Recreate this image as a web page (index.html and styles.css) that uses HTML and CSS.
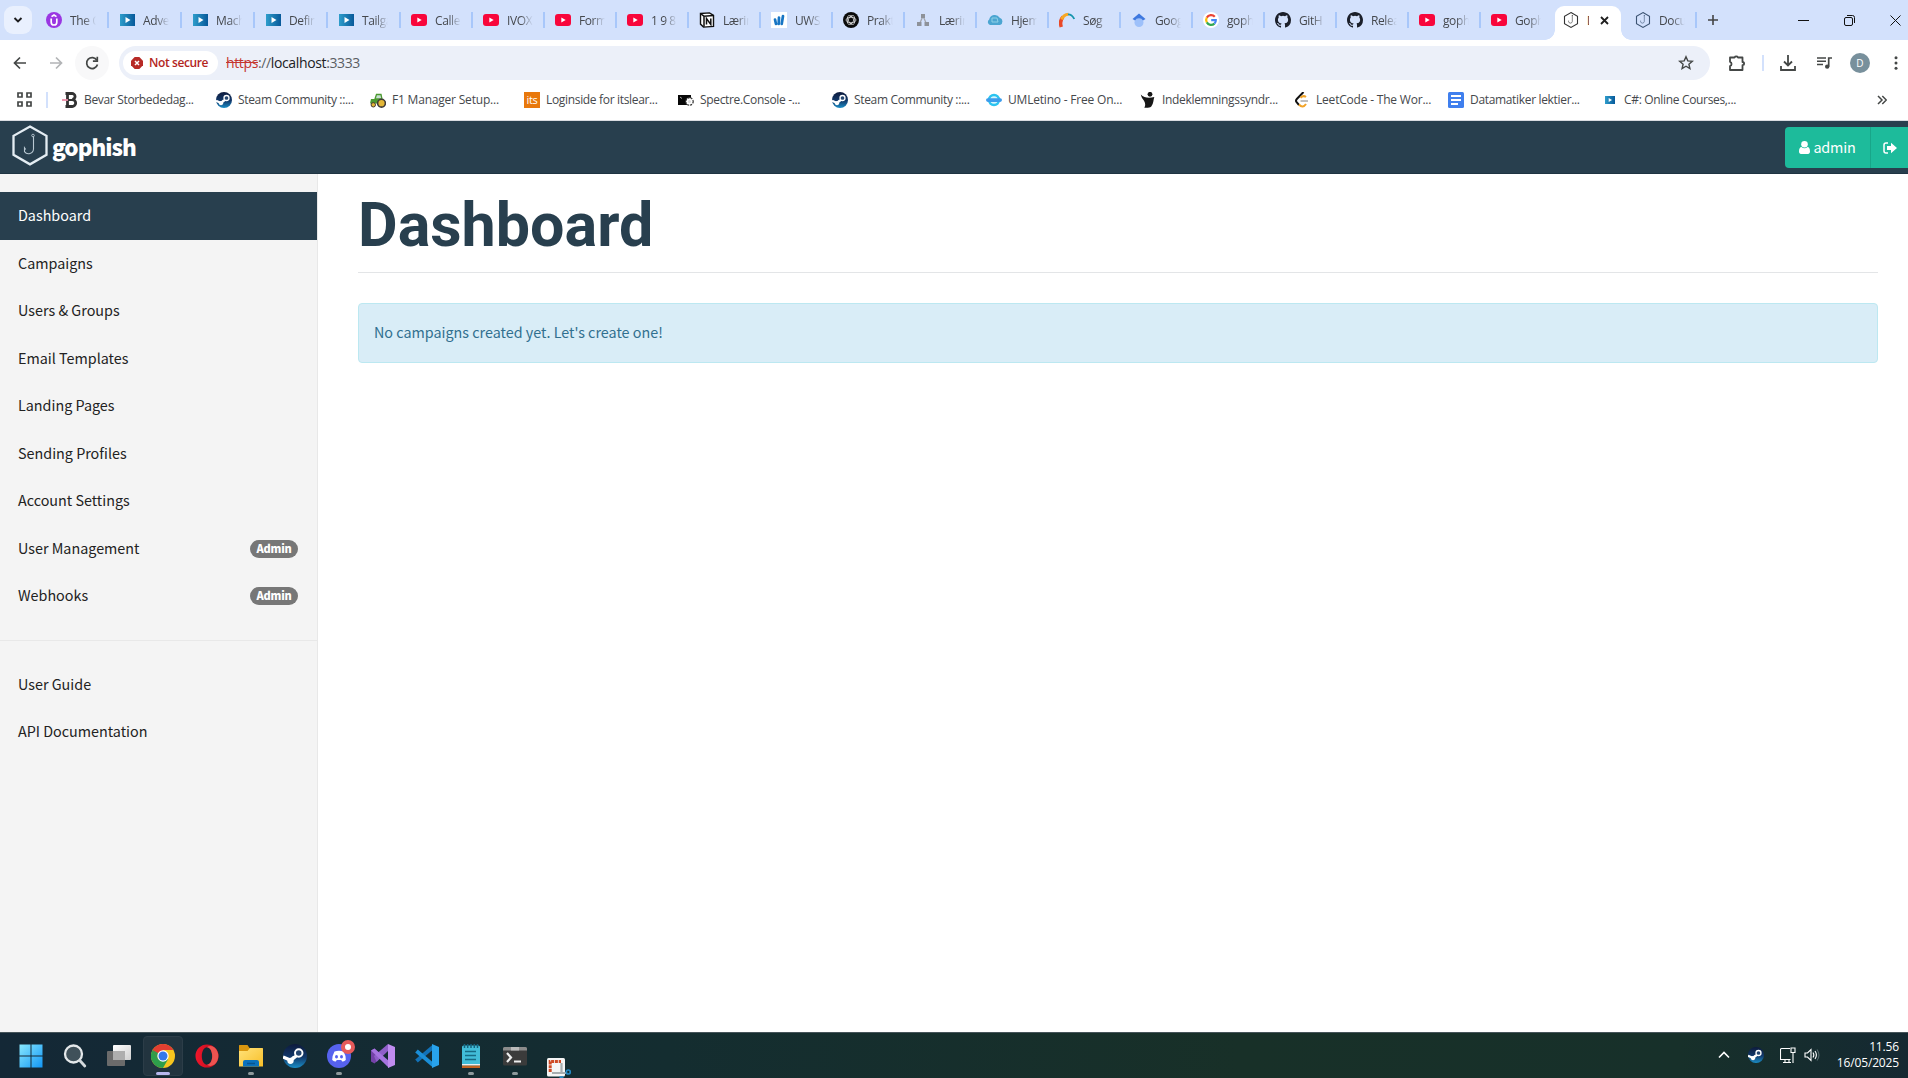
FILE: index.html
```html
<!DOCTYPE html>
<html lang="en">
<head>
<meta charset="utf-8">
<title>Dashboard - Gophish</title>
<link rel="stylesheet" href="styles.css">
</head>
<body>
<svg class="defs" width="0" height="0">
  <defs>
    <linearGradient id="gBlue" x1="0" x2="1"><stop offset="0" stop-color="#2e9dcb"/><stop offset="1" stop-color="#07599a"/></linearGradient>
    <linearGradient id="gSteam" x1="0" y1="0" x2="0" y2="1"><stop offset="0" stop-color="#0d1a3c"/><stop offset=".55" stop-color="#12396b"/><stop offset="1" stop-color="#1b8fc8"/></linearGradient>
    <linearGradient id="gWin" gradientUnits="userSpaceOnUse" x1="0" y1="0" x2="24" y2="24"><stop offset="0" stop-color="#8ceafd"/><stop offset="1" stop-color="#0f94f5"/></linearGradient>
    <linearGradient id="gOpera" x1="0" x2="1"><stop offset="0" stop-color="#f0162b"/><stop offset="1" stop-color="#b80b1a"/></linearGradient>
    <linearGradient id="gFolder" x1="0" y1="0" x2="1" y2="1"><stop offset="0" stop-color="#ffe27a"/><stop offset="1" stop-color="#f8bf28"/></linearGradient>
    <linearGradient id="gTv" x1="0" y1="0" x2="1" y2="1"><stop offset="0" stop-color="#fff"/><stop offset="1" stop-color="#cfcfcf"/></linearGradient>
  </defs>
  <symbol id="play" viewBox="0 0 16 16"><rect x="1" y="2" width="15" height="12" fill="url(#gBlue)"/><path d="M6.500 5v6l5-3z" fill="#fff"/></symbol>
  <symbol id="yt" viewBox="0 0 16 16"><rect y="2" width="16" height="12" rx="3" fill="#f8063b"/><path d="M6.300 5.400v5.200l4.400-2.600z" fill="#fff"/></symbol>
  <symbol id="steam" viewBox="0 0 16 16"><circle cx="8" cy="8" r="8" fill="url(#gSteam)"/><path d="M0 8.700l5.200 2.200 4-3.200M4.500 11.300l3-2.600" stroke="#fff" stroke-width="2.200" fill="none"/><circle cx="5" cy="11.200" r="2.100" fill="#fff"/><circle cx="10.500" cy="6" r="2.500" fill="#24456f" stroke="#fff" stroke-width="1.300"/></symbol>
  <symbol id="hook" viewBox="0 0 16 16"><path d="M8 .6l6.500 3.700v7.400L8 15.400l-6.500-3.700V4.300z" fill="none" stroke="currentColor" stroke-width="1.100"/><path d="M9.300 4.300v5.200a1.900 1.900 0 0 1-3.700.3v-1.200" fill="none" stroke="currentColor" stroke-width=".8" opacity=".75"/><circle cx="9.300" cy="3.700" r=".6" fill="currentColor"/></symbol>
  <symbol id="github" viewBox="0 0 16 16"><path fill="#1b1f2a" d="M8 0C3.580 0 0 3.580 0 8c0 3.540 2.290 6.530 5.470 7.590.4.070.55-.17.55-.38v-1.490c-2.010.37-2.530-.49-2.690-.94-.09-.23-.48-.94-.82-1.130-.28-.15-.68-.52-.01-.53.63-.01 1.080.58 1.230.82.72 1.210 1.870.87 2.330.66.070-.52.28-.87.51-1.070-1.780-.2-3.640-.89-3.640-3.950 0-.87.31-1.590.82-2.150-.08-.2-.36-1.020.08-2.120 0 0 .67-.21 2.200.82a7.600 7.600 0 0 1 4 0c1.530-1.040 2.200-.82 2.200-.82.44 1.100.16 1.920.08 2.120.51.56.82 1.270.82 2.150 0 3.070-1.870 3.750-3.650 3.950.29.25.54.73.54 1.480v2.200c0 .21.15.46.55.38A8.010 8.010 0 0 0 16 8c0-4.420-3.580-8-8-8z"/></symbol>
</svg>

<header class="tabstrip">
  <button class="tabsearch"><svg width="10" height="8" viewBox="0 0 10 8"><path d="M1.500 2l3.500 3.500L8.500 2" fill="none" stroke="#1d1d1f" stroke-width="1.900"/></svg></button>
  <div class="tab wide"><svg class="fav" viewBox="0 0 16 16"><circle cx="8" cy="8" r="8" fill="#9a36e2"/><path d="M5.200 6.500v3.700a2.800 2.800 0 0 0 5.600 0V6.500M5.500 4.600L8 3l2.500 1.600" fill="none" stroke="#fff" stroke-width="1.700"/></svg><span>The C</span></div>
  <div class="tab wide"><svg class="fav"><use href="#play"/></svg><span>Adve</span></div>
  <div class="tab wide"><svg class="fav"><use href="#play"/></svg><span>Mach</span></div>
  <div class="tab wide"><svg class="fav"><use href="#play"/></svg><span>Defin</span></div>
  <div class="tab wide"><svg class="fav"><use href="#play"/></svg><span>Tailga</span></div>
  <div class="tab"><svg class="fav"><use href="#yt"/></svg><span>Calle</span></div>
  <div class="tab"><svg class="fav"><use href="#yt"/></svg><span>IVOX</span></div>
  <div class="tab"><svg class="fav"><use href="#yt"/></svg><span>Form</span></div>
  <div class="tab"><svg class="fav"><use href="#yt"/></svg><span>1 9 8</span></div>
  <div class="tab"><svg class="fav" viewBox="0 0 16 16"><path d="M1.500 1.500l9-.6 4 2.500v11l-10 .7-3-3z" fill="#fff" stroke="#111" stroke-width="1.400"/><path d="M2 2l3 2.200 9.500-.7M5 4.200v10.500M7.500 12.500v-6l4.300 6v-6" fill="none" stroke="#111" stroke-width="1.500"/></svg><span>Lærin</span></div>
  <div class="tab"><svg class="fav" viewBox="0 0 16 16"><path d="M0 0h16v16H0z" fill="#fff"/><path d="M4 7.500l1 4.500M8 5.500l-.3 6.500M12 4l-1.300 8" stroke="#1775c4" stroke-width="2.700" stroke-linecap="round"/></svg><span>UWS</span></div>
  <div class="tab"><svg class="fav" viewBox="0 0 16 16"><circle cx="8" cy="8" r="8" fill="#0b0b0b"/><g fill="none" stroke="#ddd" stroke-width=".8"><ellipse cx="8" cy="8" rx="4.900" ry="2.700"/><ellipse cx="8" cy="8" rx="4.900" ry="2.700" transform="rotate(60 8 8)"/><ellipse cx="8" cy="8" rx="4.900" ry="2.700" transform="rotate(120 8 8)"/></g></svg><span>Prakt</span></div>
  <div class="tab"><svg class="fav" viewBox="0 0 16 16"><path d="M8 4L4.500 12M8 4l3.500 8" stroke="#a2a5ac" stroke-width="1.300"/><path d="M6 2h4v4H6zM2 10h4.500v4H2zM9.500 10H14v4H9.500z" fill="#8e9299"/></svg><span>Lærin</span></div>
  <div class="tab"><svg class="fav" viewBox="0 0 16 16"><path d="M3 13a3 3 0 0 1-.8-5.400 5.700 5.700 0 0 1 10.500-1.800A3.800 3.800 0 0 1 13 13z" fill="#4ba5d1"/><path d="M5 6h5l1 4H5z" fill="none" stroke="#8fd0e6" stroke-width="1"/></svg><span>Hjem</span></div>
  <div class="tab"><svg class="fav" viewBox="0 0 16 16"><path d="M2.300 15C1 11 2 7 4 5" fill="none" stroke="#e94827" stroke-width="3.500"/><path d="M2.600 7.500C4 4 6.500 2.500 9.500 2.300" fill="none" stroke="#f8a824" stroke-width="3"/><path d="M9 2.300c3 0 5 2 6.200 4.700" fill="none" stroke="#1695ad" stroke-width="1.800"/></svg><span>Søg</span></div>
  <div class="tab"><svg class="fav" viewBox="0 0 16 16"><circle cx="8" cy="10.500" r="4.500" fill="#9dc0fa"/><path d="M4 8.500a4.600 4.600 0 0 1 8 0L14.500 7 8 1.500 1.500 7z" fill="#3e78df"/></svg><span>Goog</span></div>
  <div class="tab"><svg class="fav" viewBox="0 0 16 16"><circle cx="8" cy="8" r="8" fill="#fff"/><g fill="none" stroke-width="2.200"><path d="M11.800 4.800A4.900 4.900 0 0 0 3.800 5.600" stroke="#ea4335"/><path d="M3.800 5.600a4.900 4.900 0 0 0 0 4.800" stroke="#fbbc05"/><path d="M3.800 10.400a4.900 4.900 0 0 0 7.600 1.200" stroke="#34a853"/><path d="M11.400 11.600c1.200-1 1.500-2.200 1.400-3.500H8.200" stroke="#4285f4"/></g></svg><span>goph</span></div>
  <div class="tab"><svg class="fav"><use href="#github"/></svg><span>GitH</span></div>
  <div class="tab"><svg class="fav"><use href="#github"/></svg><span>Relea</span></div>
  <div class="tab"><svg class="fav"><use href="#yt"/></svg><span>goph</span></div>
  <div class="tab nosep"><svg class="fav"><use href="#yt"/></svg><span>Goph</span></div>
  <div class="tab active"><svg class="fav"><use href="#hook"/></svg><span>D</span><svg class="close" width="9" height="9" viewBox="0 0 9 9"><path d="M1 1l7 7M8 1L1 8" stroke="#1f1f1f" stroke-width="1.800"/></svg></div>
  <div class="tab last"><svg class="fav blue"><use href="#hook"/></svg><span>Docu</span></div>
  <svg class="plus" width="12" height="12" viewBox="0 0 12 12"><path d="M6 1v10M1 6h10" stroke="#444" stroke-width="1.600"/></svg>
  <div class="winctl">
    <svg width="11" height="11" viewBox="0 0 11 11"><path d="M0 5.500h11" stroke="#111"/></svg>
    <svg width="11" height="11" viewBox="0 0 11 11"><rect x=".5" y="2.500" width="8" height="8" rx="1.500" fill="none" stroke="#111"/><path d="M3 .5h5.500a2 2 0 0 1 2 2V8" fill="none" stroke="#111"/></svg>
    <svg width="11" height="11" viewBox="0 0 11 11"><path d="M.5.500l10 10M10.500.500l-10 10" stroke="#111"/></svg>
  </div>
</header>

<div class="toolbar">
  <svg class="nav" viewBox="0 0 16 16"><path d="M14 8H3M8 2.500L2.500 8 8 13.500" fill="none" stroke="#444746" stroke-width="1.700"/></svg>
  <svg class="nav fwd" viewBox="0 0 16 16"><path d="M2 8h11M8 2.500L13.500 8 8 13.500" fill="none" stroke="#b2b4b6" stroke-width="1.700"/></svg>
  <div class="reload"><svg width="16" height="16" viewBox="0 0 16 16"><path d="M12.900 5.200A5.500 5.500 0 1 0 13.500 9.500" fill="none" stroke="#444746" stroke-width="1.700"/><path d="M13.300 1.800v4.400H8.900" fill="none" stroke="#444746" stroke-width="1.700"/></svg></div>
  <div class="omnibox">
    <div class="chip"><svg width="12" height="12" viewBox="0 0 12 12"><path d="M3.700 0h4.600L12 3.700v4.600L8.300 12H3.700L0 8.300V3.700z" fill="#b72a26"/><path d="M4 4l4 4M8 4L4 8" stroke="#fff" stroke-width="1.500"/></svg><span>Not secure</span></div>
    <div class="url"><s>https</s>://<b>localhost</b>:3333</div>
    <svg class="star" width="16" height="16" viewBox="0 0 16 16"><path d="M8 1.800l1.800 4.100 4.500.4-3.400 2.900 1 4.300L8 11.200l-3.900 2.300 1-4.300-3.400-2.900 4.500-.4z" fill="none" stroke="#444746" stroke-width="1.400"/></svg>
  </div>
  <div class="actions">
    <svg class="ext" width="18" height="18" viewBox="0 0 18 18"><path d="M2 3.500h4.500a2 2 0 0 1 3.500 0h4.500V8a1.600 1.600 0 0 1 0 3.200V16H2v-4a2.200 2.200 0 0 0 0-4.200z" fill="none" stroke="#444746" stroke-width="1.800" stroke-linejoin="round"/></svg>
    <i class="bar"></i>
    <svg class="dl" width="16" height="16" viewBox="0 0 16 16"><path d="M8 0v10M4 6.500l4 4 4-4M1 11v4h14v-4" fill="none" stroke="#444746" stroke-width="1.800"/></svg>
    <svg class="media" width="16" height="14" viewBox="0 0 16 14"><path d="M0 2h9M0 5.200h9M0 8.400h6" stroke="#444746" stroke-width="1.500"/><path d="M11.700 10.500V2H15" fill="none" stroke="#444746" stroke-width="1.700"/><circle cx="10.200" cy="10.600" r="2.200" fill="#444746"/></svg>
    <div class="avatar">D</div>
    <svg class="dots" width="4" height="14" viewBox="0 0 4 14"><g fill="#444746"><circle cx="2" cy="1.700" r="1.500"/><circle cx="2" cy="7" r="1.500"/><circle cx="2" cy="12.300" r="1.500"/></g></svg>
  </div>
</div>

<nav class="bookmarks">
  <svg class="apps" width="15" height="15" viewBox="0 0 15 15"><path d="M1 1h4v4H1zM10 1h4v4h-4zM1 10h4v4H1zM10 10h4v4h-4z" fill="none" stroke="#444746" stroke-width="1.700"/></svg>
  <i class="bar"></i>
  <a class="bm"><svg class="fav" viewBox="0 0 16 16"><path d="M3.500 1.500h6.300a3 3 0 0 1 .5 6 3.400 3.400 0 0 1-.3 7H3.500M5.500 2v12.500" fill="none" stroke="#333" stroke-width="2.800"/><path d="M6 8h5" stroke="#333" stroke-width="2"/><path d="M0 8h6" stroke="#e98ba5" stroke-width="1.800"/></svg><span>Bevar Storbededag...</span></a>
  <a class="bm"><svg class="fav"><use href="#steam"/></svg><span>Steam Community ::...</span></a>
  <a class="bm"><svg class="fav" viewBox="0 0 16 16"><path d="M5 7l1.500-4.500H11l1 4.500z" fill="#c8dfd4" stroke="#4d9a31" stroke-width="1.300"/><path d="M1 7h12v4.500H0z" fill="#4d9a31"/><circle cx="3.300" cy="12.800" r="2.200" fill="#e4b737" stroke="#443a31"/><circle cx="11.500" cy="11.200" r="3.900" fill="#e4b737" stroke="#403b38" stroke-width="1.600"/></svg><span class="loose">F1 Manager Setup...</span></a>
  <a class="bm"><i class="its">its</i><span>Loginside for itslear...</span></a>
  <a class="bm"><svg class="fav" viewBox="0 0 16 16"><path d="M0 3h13v10H0z" fill="#080808"/><path d="M2 5l2 1.500" stroke="#aaa"/><circle cx="11.500" cy="9.500" r="3.700" fill="#fff" stroke="#333" stroke-width="1.200" stroke-dasharray="2 1"/><circle cx="11.500" cy="9.500" r="1.500" fill="#ddd"/></svg><span>Spectre.Console -...</span></a>
  <a class="bm"><svg class="fav"><use href="#steam"/></svg><span>Steam Community ::...</span></a>
  <a class="bm"><svg class="fav" viewBox="0 0 16 16"><circle cx="8" cy="8" r="5" fill="#d6f5fd" stroke="#2bc4f0" stroke-width="2.400"/><rect y="6.300" width="16" height="3.600" rx="1.800" fill="#3c9cec"/></svg><span class="loose">UMLetino - Free On...</span></a>
  <a class="bm"><svg class="fav" viewBox="0 0 16 16"><circle cx="10" cy="2.300" r="2.400" fill="#171717"/><path d="M.8 2.500C4 6 9 6.500 14.300 5c-1 3-.5 6-3 9.500-2 1.500-4.500 1.500-7 1.200 1.700-3 .7-5-.3-7C2.500 7 1.300 5 .8 2.500z" fill="#171717"/></svg><span>Indeklemningssyndr...</span></a>
  <a class="bm"><svg class="fav" viewBox="0 0 16 16"><path d="M9.500 0L2.800 7a2.500 2.500 0 0 0 0 3.400L5 13" fill="none" stroke="#111" stroke-width="2"/><path d="M12 5C10 3.500 8.500 3.800 6.500 5.800M5 12.500c2.500 3 5 2.500 7-.5" fill="none" stroke="#f2a326" stroke-width="2"/><path d="M6.500 9H14" stroke="#b3b3b3" stroke-width="1.700"/></svg><span class="loose">LeetCode - The Wor...</span></a>
  <a class="bm"><svg class="fav" viewBox="0 0 16 16"><rect width="16" height="16" rx="1.500" fill="#3f7fee"/><path d="M3 4h10M3 8h10M3 12h7" stroke="#fff" stroke-width="1.800"/></svg><span>Datamatiker lektier...</span></a>
  <a class="bm"><svg class="fav small" viewBox="1 2 15 12"><use href="#play" width="16" height="16"/></svg><span>C#: Online Courses,...</span></a>
  <svg class="more" width="10" height="10" viewBox="0 0 10 10"><path d="M1 1l4 4-4 4M5.300 1l4 4-4 4" fill="none" stroke="#444746" stroke-width="1.500"/></svg>
</nav>

<div class="navbar">
  <a class="brand"><svg width="36" height="41" viewBox="0 0 36 41"><path d="M18 1.500l16.500 9.300v19L18 39.300 1.500 29.800v-19z" fill="none" stroke="#e4edf3" stroke-width="2.300"/><path d="M21.500 11.500V24a5 5 0 0 1-9 2.700v-4l1.200 1.800" fill="none" stroke="#b9c8d2" stroke-width="1.100"/><circle cx="21" cy="10.500" r="1.300" fill="none" stroke="#b9c8d2" stroke-width=".9"/></svg><span>gophish</span></a>
  <div class="user">
    <button class="admin"><svg width="11" height="13" viewBox="0 0 11 13"><circle cx="5.500" cy="3.300" r="3.300" fill="#fff"/><path d="M0 10.500C0 7.500 1 6 2.500 6a4.200 4.200 0 0 0 6 0C10 6 11 7.500 11 10.500c0 1.600-.8 2.500-2 2.500H2c-1.200 0-2-.9-2-2.500z" fill="#fff"/></svg><span>admin</span></button>
    <button class="logout"><svg width="14" height="12" viewBox="0 0 14 12"><path d="M5 1H3a2 2 0 0 0-2 2v6a2 2 0 0 0 2 2h2" fill="none" stroke="#fff" stroke-width="1.500"/><path d="M4 4h4V.8L14 6l-6 5.200V8H4z" fill="#fff"/></svg></button>
  </div>
</div>

<div class="page">
  <aside class="sidebar">
    <a class="item current">Dashboard</a>
    <a class="item">Campaigns</a>
    <a class="item">Users &amp; Groups</a>
    <a class="item">Email Templates</a>
    <a class="item">Landing Pages</a>
    <a class="item">Sending Profiles</a>
    <a class="item">Account Settings</a>
    <a class="item">User Management<span class="badge">Admin</span></a>
    <a class="item">Webhooks<span class="badge">Admin</span></a>
    <hr>
    <a class="item">User Guide</a>
    <a class="item">API Documentation</a>
  </aside>
  <main class="content">
    <h1>Dashboard</h1>
    <div class="alert">No campaigns created yet. Let's create one!</div>
  </main>
</div>

<footer class="taskbar">
  <div class="apps-row">
    <div class="app"><svg viewBox="0 0 24 24"><path d="M.5.500h11v11H.5zM12.500.500h11v11h-11zM.5 12.500h11v11H.5zM12.500 12.500h11v11h-11z" fill="url(#gWin)"/></svg></div>
    <div class="app"><svg viewBox="0 0 24 24"><circle cx="10.500" cy="10" r="8.500" fill="#40515a" stroke="#e4e8ea" stroke-width="2.300"/><path d="M16.800 16.500l5 5.500" stroke="#d5dadd" stroke-width="2.800" stroke-linecap="round"/></svg></div>
    <div class="app"><svg viewBox="0 0 24 24"><rect x="6" y="1" width="18" height="15" rx="1" fill="url(#gTv)"/><rect y="7" width="18" height="15" rx="1" fill="#6b6b6b"/><path d="M6 7h12v9H6z" fill="#aeaeae"/></svg></div>
    <div class="app focus"><svg viewBox="0 0 24 24"><circle cx="12" cy="12" r="12" fill="#f7c51e"/><path d="M12 12L1.600 6A12 12 0 0 0 12 24l5.200-9z" fill="#2e9e4b"/><path d="M1.600 6a12 12 0 0 1 20.800 0H12v6L6.800 15z" fill="#e23e31"/><path d="M1.600 6L6.800 15l5.200-3z" fill="#2e9e4b"/><circle cx="12" cy="12" r="5.700" fill="#fff"/><circle cx="12" cy="12" r="4.500" fill="#3478e8"/></svg></div>
    <div class="app"><svg viewBox="0 0 24 24"><path fill-rule="evenodd" d="M12 .5a11.500 11.500 0 1 0 0 23 11.500 11.500 0 0 0 0-23zM12 3.200c2.900 0 5.200 4 5.200 8.800s-2.300 8.800-5.200 8.800-5.200-4-5.200-8.800 2.300-8.800 5.200-8.800z" fill="url(#gOpera)"/><path d="M12 3.200C14 1.500 17 1.800 19.500 3.400a11.500 11.500 0 0 1 0 17.200c-2.500 1.600-5.500 1.900-7.500.2 2.900 0 5.200-4 5.200-8.800S14.900 3.200 12 3.200z" fill="#ee5350"/></svg></div>
    <div class="app run"><svg viewBox="0 0 24 24"><path d="M0 3.500A1.500 1.500 0 0 1 1.500 1H8.500l2 3H23a1 1 0 0 1 1 1v3H0z" fill="#d9960f"/><path d="M0 7h8.500l2.500-3H23a1 1 0 0 1 1 1v17.500H0z" fill="url(#gFolder)"/><path d="M4 22.500v-4.500a2 2 0 0 1 2-2h12a2 2 0 0 1 2 2v4.500z" fill="#0b72bd"/><path d="M8 19.500h8" stroke="#08548f" stroke-width="1.500"/></svg></div>
    <div class="app"><svg viewBox="0 0 16 16"><use href="#steam" width="16" height="16"/></svg></div>
    <div class="app run"><svg viewBox="0 0 24 24"><circle cx="12" cy="12" r="12" fill="#5662ee"/><path d="M7.500 7.500q4.500-1.300 9 0 2.500 4 2.300 8.500-1.800 1.500-3.700 1.500l-.8-1.500h-4.600l-.8 1.500q-1.900 0-3.700-1.500 0-4.500 2.300-8.500z" fill="#fff"/><ellipse cx="9.500" cy="12.800" rx="1.500" ry="1.700" fill="#5662ee"/><ellipse cx="14.500" cy="12.800" rx="1.500" ry="1.700" fill="#5662ee"/></svg><i class="notify"></i></div>
    <div class="app"><svg viewBox="0 0 24 24"><path d="M0 6.500l3.500-2L8 9l-3.500 3L8 15l-4.500 4.500-3.500-2z" fill="#7442a8"/><path d="M3 12L17 0v7L5.500 18z" fill="#8f5fc9"/><path d="M3.500 4.500L18 17v7L0 6.500z" fill="#a674e0"/><path d="M17 0l7 3v18l-7 3z" fill="#c08cf0"/></svg></div>
    <div class="app"><svg viewBox="0 0 24 24"><path d="M1.500 17L18 3" stroke="#1272b8" stroke-width="4"/><path d="M1.500 7L18 21" stroke="#1b8fd8" stroke-width="4"/><path d="M17 0l7 3v18l-7 3z" fill="#28a3ec"/></svg></div>
    <div class="app run"><svg viewBox="0 0 24 24"><rect x="3" y="1.500" width="18" height="22" rx="1.500" fill="#42bdd8"/><path d="M5.500 0v4M8.700 0v4M12 0v4M15.300 0v4M18.500 0v4" stroke="#15637e" stroke-width="1.500"/><path d="M6 7.500h11M6 11.500h11M6 15.500h11" stroke="#176b84" stroke-width="1.500"/><path d="M3 20h18v1.500H3z" fill="#eee"/><path d="M3 21.500h18V24H3z" fill="#c26322"/></svg></div>
    <div class="app run"><svg viewBox="0 0 24 24"><rect y="3" width="24" height="18.500" rx="1.500" fill="#3b3b3b"/><path d="M0 6.500V4.500A1.500 1.500 0 0 1 1.500 3h21A1.500 1.500 0 0 1 24 4.500v2z" fill="#8c8c8c"/><path d="M8 3h8v3.500H8z" fill="#bbb"/><path d="M4 9l4 4.500L4 18" fill="none" stroke="#eee" stroke-width="2.200"/><path d="M11 17.500h7" stroke="#eee" stroke-width="2"/></svg></div>
    <div class="app snip"><svg viewBox="0 0 24 21"><rect width="18" height="18.500" rx="1.500" fill="#f5f5f5"/><path d="M3.200 14V3.500H14" fill="none" stroke="#cf4a24" stroke-width="3" stroke-dasharray="3 .8"/><path d="M5 15h14M14.500 5v11" stroke="#a7adb0" stroke-width="2.200" fill="none"/><circle cx="21.300" cy="14" r="2" fill="none" stroke="#2488c4" stroke-width="1.700"/><path d="M12.500 19.500h4" stroke="#2488c4" stroke-width="2.500"/></svg></div>
  </div>
  <div class="tray">
    <svg class="chev" width="12" height="8" viewBox="0 0 12 8"><path d="M1 6.500l5-5 5 5" fill="none" stroke="#fff" stroke-width="1.600"/></svg>
    <svg class="tsteam" width="16" height="16"><use href="#steam"/></svg>
    <svg class="net" width="16" height="17" viewBox="0 0 16 17"><path d="M10 1.500H1.500a1 1 0 0 0-1 1v10h10M3 15.500h8M5 12.500v3M9 12.500v3M11 1h4v4.500h-4zM13 5.500V16" fill="none" stroke="#fff" stroke-width="1.100"/></svg>
    <svg class="vol" width="16" height="14" viewBox="0 0 16 14"><path d="M1 5h2.500L7 1.500v11L3.500 9H1z" fill="none" stroke="#fff" stroke-width="1.100"/><path d="M9 4.500q1.700 2.500 0 5M11 3q2.800 4 0 8" fill="none" stroke="#fff" stroke-width="1.100"/><path d="M13 1.500q4 5.500 0 11" fill="none" stroke="#55696c" stroke-width="1.100"/></svg>
    <div class="clock"><div>11.56</div><div>16/05/2025</div></div>
  </div>
</footer>
</body>
</html>
```
FILE: styles.css
```css
* { box-sizing: border-box; }
body {
  margin: 0;
  width: 1908px;
  height: 1078px;
  overflow: hidden;
  display: flex;
  flex-direction: column;
  background: #fff;
  font-family: "Noto Sans CJK SC", "Noto Sans", sans-serif;
}
.defs { position: absolute; }
svg { display: block; flex: none; }
button { border: 0; padding: 0; font: inherit; }
.fav { width: 16px; height: 16px; }

/* browser tabs */
.tabstrip {
  height: 40px;
  flex: none;
  background: #d3e1fc;
  display: flex;
  align-items: center;
  font: 12px "Open Sans", sans-serif;
  color: #45484d;
}
.tabsearch {
  width: 28px;
  height: 28px;
  margin: 0 4px;
  border-radius: 9px;
  background: #e9f0fe;
  display: grid;
  place-items: center;
}
.tab {
  width: 72px;
  height: 16px;
  flex: none;
  display: flex;
  align-items: center;
  gap: 8px;
  padding-left: 10px;
  border-right: 2px solid #a8c7fa;
}
.tab span {
  width: 26px;
  overflow: hidden;
  white-space: nowrap;
  letter-spacing: -0.4px;
  -webkit-mask-image: linear-gradient(90deg, #000 50%, transparent 100%);
  mask-image: linear-gradient(90deg, #000 50%, transparent 100%);
}
.tab.wide { width: 73px; }
.tab.nosep { border: 0; }
.tab.active {
  position: relative;
  width: 66px;
  height: 34px;
  margin: 6px 0 0 2px;
  padding: 0 0 6px 8px;
  border: 0;
  border-radius: 9px 9px 0 0;
  background: #fff;
  color: #333;
}
.tab.active::before, .tab.active::after {
  content: "";
  position: absolute;
  bottom: 0;
  width: 10px;
  height: 10px;
}
.tab.active::before { left: -10px; background: radial-gradient(circle at 0 0, transparent 9.500px, #fff 10px); }
.tab.active::after { right: -10px; background: radial-gradient(circle at 100% 0, transparent 9.500px, #fff 10px); }
.tab.active span { width: 2px; -webkit-mask-image: none; mask-image: none; }
.tab.active .close { margin-left: 3px; }
.tab.last { width: 76px; padding-left: 14px; }
.blue { color: #3d5473; }
.plus { margin-left: 10px; }
.winctl { margin: 0 7px 0 auto; display: flex; gap: 35px; }

/* address bar */
.toolbar {
  height: 46px;
  flex: none;
  display: flex;
  align-items: center;
  padding-left: 12px;
  font-family: "Open Sans", sans-serif;
}
.nav { width: 16px; height: 16px; }
.fwd { margin-left: 20px; }
.reload {
  width: 34px;
  height: 34px;
  margin: 0 10px 0 11px;
  border-radius: 50%;
  background: #f8f8f9;
  display: grid;
  place-items: center;
}
.omnibox {
  width: 1591px;
  height: 34px;
  border-radius: 17px;
  background: #ecf0f9;
  display: flex;
  align-items: center;
  padding: 0 16px 0 4px;
}
.chip {
  width: 95px;
  height: 24px;
  border-radius: 12px;
  background: #fff;
  display: flex;
  align-items: center;
  gap: 6px;
  padding-left: 8px;
  color: #b3261e;
  font-size: 12px;
  font-weight: 600;
  letter-spacing: -0.4px;
  white-space: nowrap;
}
.chip span { padding-bottom: 1px; }
.url { margin-left: 8px; padding-bottom: 2px; font-size: 14px; letter-spacing: -0.37px; color: #5a5e63; }
.url s { color: #c5362f; }
.url b { font-weight: 400; color: #202124; }
.star { margin-left: auto; }
.bar { width: 2px; height: 16px; background: #d3e1fc; }
.actions { flex: 1; display: flex; align-items: center; padding-left: 18px; }
.actions .bar { margin: 0 16px; }
.actions .media { margin-left: 21px; }
.avatar {
  width: 20px;
  height: 20px;
  margin: 0 24px 0 17px;
  border-radius: 50%;
  background: #78909c;
  color: #fff;
  font-size: 10px;
  line-height: 20px;
  text-align: center;
}
.bookmarks {
  height: 35px;
  flex: none;
  display: flex;
  align-items: center;
  padding: 0 21px 7px 17px;
  border-bottom: 1px solid #d9dce1;
  font: 12px "Open Sans", sans-serif;
  color: #45484c;
}
.bookmarks > .bar { margin: 0 14px 0 14px; }
.bm {
  width: 154px;
  flex: none;
  display: flex;
  align-items: center;
  gap: 6px;
  white-space: nowrap;
  letter-spacing: -0.33px;
}
.loose { letter-spacing: -0.2px; }
.fav.small { width: 10px; height: 8px; margin: 0 3px; }
.its {
  width: 16px;
  height: 16px;
  background: #e8780c;
  color: #fff;
  font-style: normal;
  font-size: 11px;
  line-height: 15px;
  text-align: center;
}
.more { margin-left: auto; }

/* application header */
.navbar {
  height: 53px;
  flex: none;
  background: #283f4e;
  border-bottom: 1px solid #1f3442;
  display: flex;
  justify-content: space-between;
  padding: 4px 0 0 12px;
  color: #fff;
}
.brand { display: flex; gap: 5px; font-size: 22.500px; font-weight: 900; line-height: 43px; letter-spacing: -1px; }
.brand span { margin-left: -1px; }
.user { display: flex; padding-top: 2px; }
.user button {
  height: 41px;
  background: #1dbb9b;
  color: #fff;
  display: flex;
  align-items: center;
  justify-content: center;
  gap: 3px;
  font-size: 14.400px;
  letter-spacing: -0.2px;
}
.user span { padding-bottom: 2px; }
.admin { width: 85px; border-radius: 4px 0 0 4px; }
.user .logout { width: 38px; border-left: 1px solid #18a689; }

.page { flex: 1; display: flex; min-height: 0; }
.sidebar {
  width: 318px;
  background: #f4f4f4;
  border-right: 1px solid #e8e8e8;
  padding-top: 18px;
}
.item {
  height: 47.500px;
  display: flex;
  align-items: center;
  justify-content: space-between;
  padding: 0 19px 2px 18px;
  font-size: 14.350px;
  line-height: 24px;
  color: #222;
}
.item.current { background: #283f4e; color: #fff; height: 48px; }
.badge {
  width: 48px;
  height: 18px;
  margin-top: 2px;
  border-radius: 9px;
  background: #777;
  color: #fff;
  font-size: 11px;
  font-weight: 900;
  line-height: 17px;
  letter-spacing: -0.2px;
  text-align: center;
}
.sidebar hr { border: 0; border-top: 1px solid #e8e8e8; margin: 20px 0; }
.content { flex: 1; padding: 0 30px 0 40px; }
h1 {
  margin: 0 0 30px;
  height: 99px;
  border-bottom: 1px solid #e3e5e7;
  font: 700 61px/103px Roboto, sans-serif;
  color: #283f4e;
}
.alert {
  height: 60px;
  border: 1px solid #bce8f1;
  border-radius: 4px;
  background: #d9edf7;
  padding: 0 15px;
  font-size: 14.350px;
  line-height: 55px;
  color: #31708f;
}

/* desktop taskbar */
.taskbar {
  height: 46px;
  flex: none;
  display: flex;
  justify-content: space-between;
  border-top: 1px solid #46545a;
  background: linear-gradient(90deg, #142836, #142d30 35%, #183028 65%, #17302a 88%, #152932);
}
.apps-row { display: flex; padding: 3px 0 0 11px; gap: 4px; }
.app {
  position: relative;
  width: 40px;
  height: 40px;
  display: flex;
  justify-content: center;
  padding-top: 8px;
  border-radius: 4px;
}
.app > svg { width: 24px; height: 24px; }
.app.focus { background: #22343f; border: 1px solid #2c3d48; padding-top: 7px; }
.app.run::after, .app.focus::after {
  content: "";
  position: absolute;
  bottom: 1px;
  left: 17px;
  width: 6px;
  height: 3px;
  border-radius: 2px;
  background: #8e999c;
}
.app.focus::after { left: 12px; bottom: 0; width: 14px; background: #b8b8ef; }
.notify {
  position: absolute;
  left: 22px;
  top: 4px;
  width: 14px;
  height: 14px;
  border: 4px solid #e65a5a;
  border-radius: 50%;
  background: #fff;
}
.app.snip { padding-top: 22px; }
.app.snip > svg { height: 21px; }
.tray { display: flex; align-items: center; padding: 0 9px 0 0; }
.tray > svg { margin-bottom: 1px; }
.tray > .chev { margin-bottom: 1px; }
.tsteam { margin-left: 18px; }
.net { margin-left: 16px; }
.vol { margin-left: 8px; }
.clock {
  width: 79px;
  padding-bottom: 1px;
  text-align: right;
  color: #fff;
  font: 12px/16px "Open Sans", sans-serif;
  letter-spacing: -0.15px;
}
```
